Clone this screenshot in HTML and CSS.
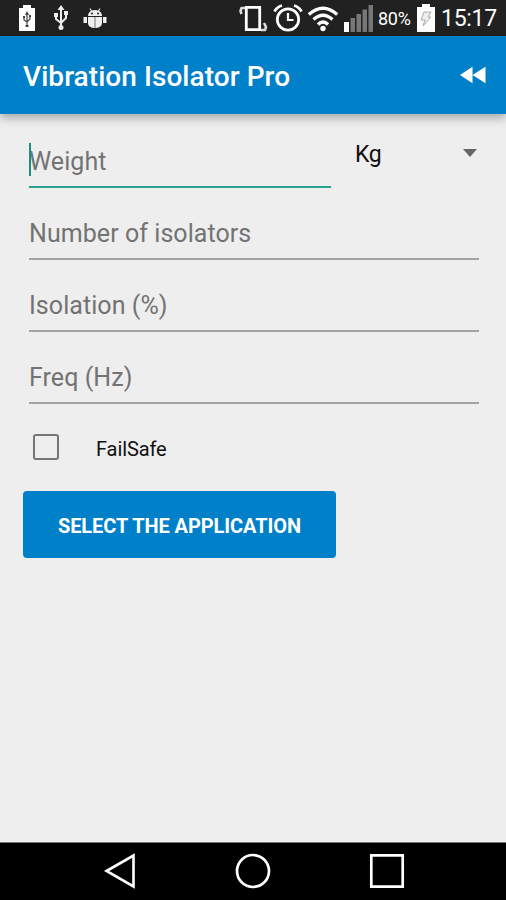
FILE: index.html
```
<!DOCTYPE html>
<html lang="en">
<head>
<meta charset="utf-8">
<title>Vibration Isolator Pro</title>
<link rel="stylesheet" href="styles.css">
</head>
<body>
<div class="screen">
  <header class="status">
    <svg class="usb-battery" width="18" height="26" viewBox="0 0 18 26"><path fill="#fff" d="M5 0h8v3h4v23H1V3h4z"/><path fill="none" stroke="#444" stroke-width="1.2" d="M9 8v13M6 12v3l3 2 3-3v-3"/><path fill="#444" d="M9 6l2 4H7zM7.500 20h3v2h-3zM5 11h2v2H5zM11 10h2v2h-2z"/></svg>
    <svg class="usb" width="16" height="26" viewBox="0 0 16 26"><path fill="none" stroke="#eee" stroke-width="2" d="M8 4v18M3 10v4l5 4 5-5V9"/><path fill="#eee" d="M8 0l3.500 5h-7zM1 8h4v4H1zM11 6h4v4h-4z"/><circle cx="8" cy="22.500" r="2.500" fill="#eee"/></svg>
    <svg class="robot" width="24" height="22" viewBox="0 0 24 22"><path fill="#eee" d="M5 8C5 5 7 3.500 8 3L6.500.8l.8-.6L9 2.400q3-1 6 0L16.700.2l.8.6L16 3c1 .5 3 2 3 5zM5 9h14v6c0 4-4 5-7 5s-7-1-7-5zM.5 9H4v6H.5zM20 9h3.500v6H20z"/><circle cx="9" cy="5.500" r="1" fill="#222"/><circle cx="15" cy="5.500" r="1" fill="#222"/><path stroke="#777" d="M12 9v11"/></svg>
    <svg class="vibrate" width="30" height="27" viewBox="0 0 30 27"><path fill="none" stroke="#fff" stroke-width="2.800" d="M7.300 2.300h13.400v22.400H7.300z"/><path fill="none" stroke="#ddd" stroke-width="2.600" stroke-linejoin="round" d="M6 3H2.500l-1 3 1 3M22 25h4l1-3-2-4"/></svg>
    <svg class="alarm" width="30" height="28" viewBox="0 0 30 28"><g fill="none" stroke="#fff"><circle cx="15" cy="15.500" r="10.700" stroke-width="2.700"/><path stroke-width="2.200" d="M15 9v7h5.500"/><path stroke-width="2.800" d="M1.500 7.500Q4 3 9 1.500M28.500 7.500Q26 3 21 1.500"/></g></svg>
    <svg class="wifi" width="32" height="26" viewBox="0 0 32 26"><g fill="none" stroke="#fff" stroke-width="3.300"><path d="M1.800 8.500Q16-4 30.200 8.500M6.500 13.500Q16 5 25.500 13.500M11 18.500Q16 13.500 21 18.500"/></g><circle cx="16" cy="22.500" r="2.700" fill="#fff"/></svg>
    <svg class="signal" width="30" height="27" viewBox="0 0 30 27"><path fill="#fff" d="M0 17h5v10H0z"/><path fill="#777" d="M6.500 13h4.500v14h-4.500zM12.500 9h4.500v18h-4.500zM18.500 4.500h4.500v22.500h-4.500zM24.500 0h4.500v27h-4.500z"/></svg>
    <span class="percent">80%</span>
    <svg class="charging" width="18" height="28" viewBox="0 0 18 28"><path fill="#fff" d="M5 0h8v3h5v25H0V3h5z"/><path fill="#eee" stroke="#aaa" d="M7 8h7l-3 5h3l-8 9 2-6H4z"/></svg>
    <time class="clock">15:17</time>
  </header>
  <div class="appbar">
    <h1>Vibration Isolator Pro</h1>
    <svg width="26" height="18" viewBox="0 0 26 18"><path fill="#fff" d="M0 9L12.500.8v16.400zM12.500 9L25.500.8v16.400z"/></svg>
  </div>
  <main>
    <div class="weight-row">
      <div class="field active"><i class="caret"></i><span class="weight">Weight</span></div>
      <div class="unit"><span>Kg</span><svg width="14" height="8" viewBox="0 0 14 8"><path fill="#666" d="M0 0h14L7 8z"/></svg></div>
    </div>
    <div class="field"><span>Number of isolators</span></div>
    <div class="field"><span>Isolation (%)</span></div>
    <div class="field"><span>Freq (Hz)</span></div>
    <label class="check"><span class="box"></span><span class="failsafe">FailSafe</span></label>
    <div class="button"><span>SELECT THE APPLICATION</span></div>
  </main>
  <nav>
    <svg class="back" width="32" height="36" viewBox="0 0 32 36"><path fill="none" stroke="#fff" stroke-width="2.600" d="M2.500 18L29.500 2.500v31z"/></svg>
    <svg class="home" width="36" height="36" viewBox="0 0 36 36"><circle cx="18" cy="18" r="16" fill="none" stroke="#fff" stroke-width="2.700"/></svg>
    <svg class="recent" width="36" height="36" viewBox="0 0 36 36"><path fill="none" stroke="#fff" stroke-width="2.700" d="M2.300 2.300h31.400v31.400H2.300z"/></svg>
  </nav>
</div>
</body>
</html>
```
FILE: styles.css
```
* { box-sizing: border-box; }
body { margin: 0; font-family: Roboto, "Liberation Sans", sans-serif; }
svg { display: block; flex: none; }
.screen { width: 506px; height: 900px; display: flex; flex-direction: column; background: #eee; overflow: hidden; }

.status { height: 36px; flex: none; display: flex; align-items: flex-start; background: #212121; color: #fff; white-space: nowrap; }
.usb-battery { margin: 5px 0 0 18px; }
.usb { margin: 5px 0 0 17px; }
.robot { margin: 8px 0 0 14px; }
.vibrate { margin: 5px 0 0 132px; }
.alarm { margin: 4px 0 0 4px; }
.wifi { margin: 6px 0 0 4px; }
.signal { margin: 5px 0 0 5px; }
.percent { width: 35px; margin: 1px 0 0 4px; font-size: 18px; line-height: 36px; letter-spacing: -.3px; }
.charging { margin: 4px 0 0 4px; }
.clock { margin-left: 6px; font-size: 23px; line-height: 38px; letter-spacing: -.3px; }

.appbar { height: 78px; flex: none; display: flex; align-items: center; justify-content: space-between; padding: 0 20px 0 23px; background: #0080c8; color: #fff; box-shadow: 0 3px 10px rgba(0, 0, 0, .35); }
h1 { margin: 4px 0 0; font-size: 28px; font-weight: 500; line-height: 36px; letter-spacing: .06px; white-space: nowrap; }

main { flex: 1; padding: 14px 27px 0 29px; }
.weight-row { display: flex; justify-content: space-between; }
.weight-row .field { width: 302px; height: 60px; margin: 0; line-height: 67px; }
.field { display: flex; height: 58px; width: 450px; margin-top: 14px; border-bottom: 2px solid #a3a3a3; color: #737373; font-size: 25px; line-height: 64px; letter-spacing: .06px; white-space: nowrap; }
.field.active { border-color: #2ca38d; position: relative; }
.caret { position: absolute; left: 0; top: 15px; width: 2px; height: 33px; background: #168f7c; }
.unit { width: 124px; height: 50px; display: flex; align-items: center; justify-content: space-between; padding-right: 2px; color: #111; font-size: 23px; letter-spacing: -.3px; }
.unit span { margin-top: 3px; }
.check { display: flex; align-items: center; height: 26px; margin: 30px 0 0 4px; }
.box { width: 26px; height: 26px; border: 2px solid #757575; border-radius: 3px; }
.failsafe { margin-left: 37px; margin-top: 3px; color: #111; font-size: 20px; letter-spacing: -.1px; }
.button { width: 313px; height: 67px; margin: 31px 0 0 -6px; display: flex; justify-content: center; align-items: center; border-radius: 4px; background: #0080c8; color: #fff; font-size: 20px; font-weight: 700; letter-spacing: -.08px; white-space: nowrap; }
.button span { margin-top: 2px; }

nav { height: 58px; flex: none; display: flex; align-items: center; padding-bottom: 1px; background: #000; border-top: 1px solid #777; }
.back { margin-left: 104px; }
.home { margin-left: 99px; }
.recent { margin-left: 98px; }
```
